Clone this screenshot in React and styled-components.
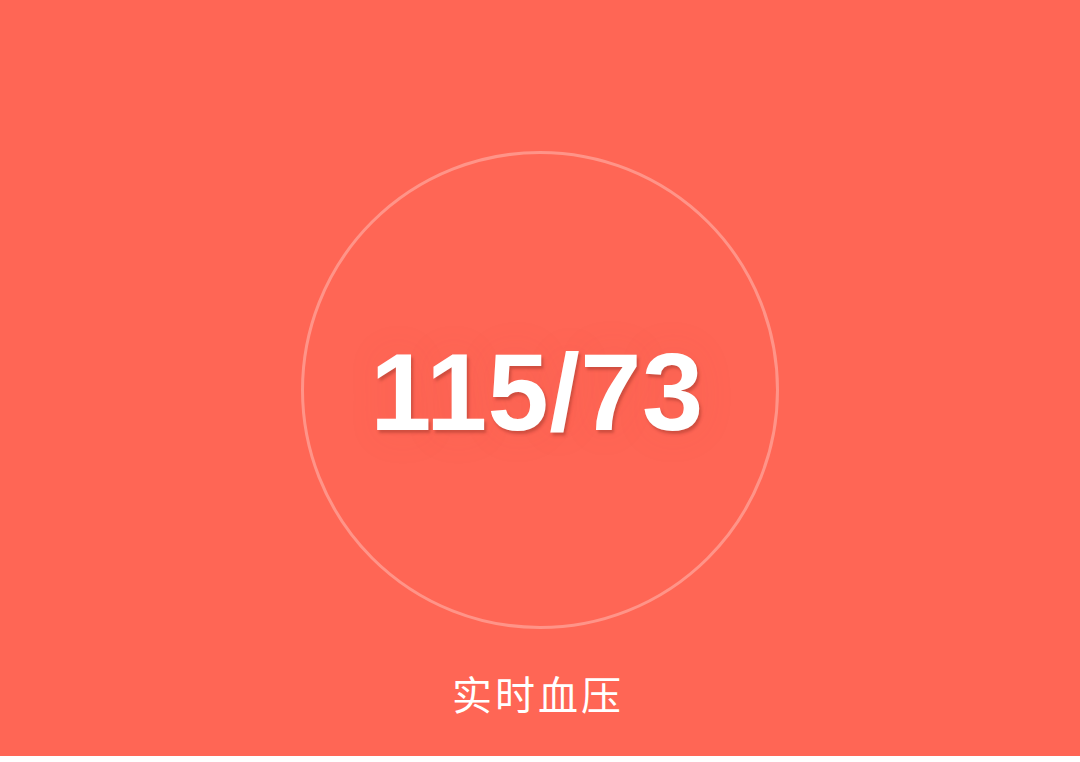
import React from "react";
import styled, { createGlobalStyle } from "styled-components";

const GlobalStyle = createGlobalStyle`
  html, body {
    margin: 0;
    padding: 0;
    background: #ffffff;
  }
`;

const Screen = styled.div`
  height: 756px;
  background: #ff6655;
  display: flex;
  flex-direction: column;
  align-items: center;
  box-sizing: border-box;
  padding-top: 151px;
  box-shadow: 0 3px 3px -1px rgba(120, 60, 50, 0.35);
  font-family: "Liberation Sans", Arial, sans-serif;
`;

const Ring = styled.div`
  width: 478px;
  height: 478px;
  border-radius: 50%;
  border: 3px solid rgba(255, 255, 255, 0.3);
  box-sizing: border-box;
  display: flex;
  align-items: center;
  justify-content: center;
`;

const Reading = styled.div`
  color: #ffffff;
  font-weight: bold;
  font-size: 110px;
  letter-spacing: 0.5px;
  line-height: 1;
  margin-top: 4px;
  margin-left: -6px;
  text-shadow: 2px 3px 3px rgba(150, 50, 40, 0.45), 0 0 40px rgba(200, 70, 60, 0.12);
`;

const Label = styled.div`
  margin-top: 40px;
  color: #ffffff;
  font-family: "Noto Sans CJK SC", sans-serif;
  font-weight: 400;
  font-size: 40px;
  letter-spacing: 3px;
  line-height: 1.2;
  margin-left: -4px;
`;

export default function App() {
  return (
    <>
      <GlobalStyle />
      <Screen>
        <Ring>
          <Reading>115/73</Reading>
        </Ring>
        <Label>实时血压</Label>
      </Screen>
    </>
  );
}
